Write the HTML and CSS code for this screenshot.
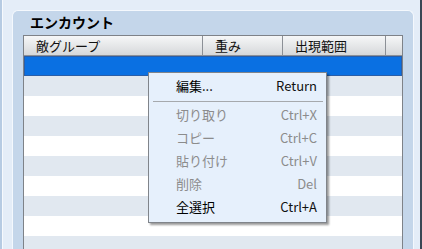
FILE: index.html
```html
<!DOCTYPE html>
<html lang="ja">
<head>
<meta charset="utf-8">
<link rel="stylesheet" href="styles.css">
</head>
<body>
<div class="app">
  <div class="left-edge"></div>
  <div class="panel">
    <div class="panel-title">エンカウント</div>
    <div class="table">
      <div class="row header">
        <div class="cell c1">敵グループ</div>
        <div class="cell c2">重み</div>
        <div class="cell c3">出現範囲</div>
        <div class="cell c4"></div>
      </div>
      <div class="row selected"></div>
      <div class="row alt"></div>
      <div class="row"></div>
      <div class="row alt"></div>
      <div class="row"></div>
      <div class="row alt"></div>
      <div class="row"></div>
      <div class="row alt"></div>
      <div class="row"></div>
      <div class="row alt"></div>
    </div>
  </div>
  <div class="right-edge"></div>
</div>
<div class="menu">
  <div class="item"><span>編集...</span><span class="key">Return</span></div>
  <div class="sep"></div>
  <div class="item disabled"><span>切り取り</span><span class="key">Ctrl+X</span></div>
  <div class="item disabled"><span>コピー</span><span class="key">Ctrl+C</span></div>
  <div class="item disabled"><span>貼り付け</span><span class="key">Ctrl+V</span></div>
  <div class="item disabled"><span>削除</span><span class="key">Del</span></div>
  <div class="item"><span>全選択</span><span class="key">Ctrl+A</span></div>
</div>
</body>
</html>
```
FILE: styles.css
```css
html, body {
  margin: 0;
  padding: 0;
  width: 422px;
  height: 249px;
  overflow: hidden;
  background: #e4edf8;
  font-family: "Noto Sans CJK JP", "Noto Sans", sans-serif;
  font-size: 13px;
  color: #000;
}
.app {
  display: flex;
  height: 249px;
}
.left-edge {
  width: 2px;
  background: #b6cbe3;
  border-right: 1px solid #f6f9fd;
  margin-right: 9px;
  flex: none;
}
.panel {
  flex: none;
  margin-top: 10px;
  background: #c4d6ea;
  border: 1px solid #f4f8fd;
  border-bottom: none;
  border-radius: 6px 6px 0 0;
  padding: 0 10px;
  box-sizing: content-box;
  width: 380px;
}
.panel-title {
  height: 24px;
  line-height: 22px;
  padding-left: 7px;
  font-weight: bold;
  font-size: 14px;
  box-sizing: border-box;
}
.table {
  border: 1px solid #7e8288;
  border-bottom: none;
  background: #fff;
  width: 378px;
}
.row {
  height: 20px;
  display: flex;
}
.row.alt {
  background: #e1e8f0;
}
.row.selected {
  background: #0a70e2;
  box-shadow: inset 0 0 0 1px #2a5ea8;
}
.row.header {
  height: 19px;
  background: linear-gradient(#f6f7f8, #d6d8da);
  border-bottom: 1px solid #8c9096;
}
.cell {
  height: 19px;
  line-height: 19px;
  padding-left: 12px;
  box-sizing: border-box;
  border-right: 1px solid #8c9096;
  white-space: nowrap;
  color: #111;
}
.c1 { width: 179px; }
.c2 { width: 80px; }
.c3 { width: 103px; }
.c4 { width: 16px; border-right: none; padding: 0; }
.right-edge {
  flex: none;
  width: 6px;
  background: #e4edf8;
  border-right: 2px solid #3a4654;
}
.menu {
  position: absolute;
  left: 148px;
  top: 72px;
  box-sizing: border-box;
  width: 179px;
  height: 151px;
  padding: 1px 0 0 0;
  background: #e6f0fc;
  border: 1px solid #80848a;
  box-shadow: 2px 2px 2px rgba(0, 0, 0, 0.4);
}
.item {
  display: flex;
  justify-content: space-between;
  height: 23px;
  line-height: 23px;
  padding: 0 9px 0 27px;
}
.key {
  color: #111;
}
.item.disabled, .item.disabled .key {
  color: #8c8c8c;
}
.sep {
  height: 6px;
  margin: 0 3px 0 4px;
  position: relative;
}
.sep::after {
  content: "";
  position: absolute;
  left: 0;
  right: 0;
  top: 4px;
  height: 1px;
  background: #a6a9ad;
}
```
